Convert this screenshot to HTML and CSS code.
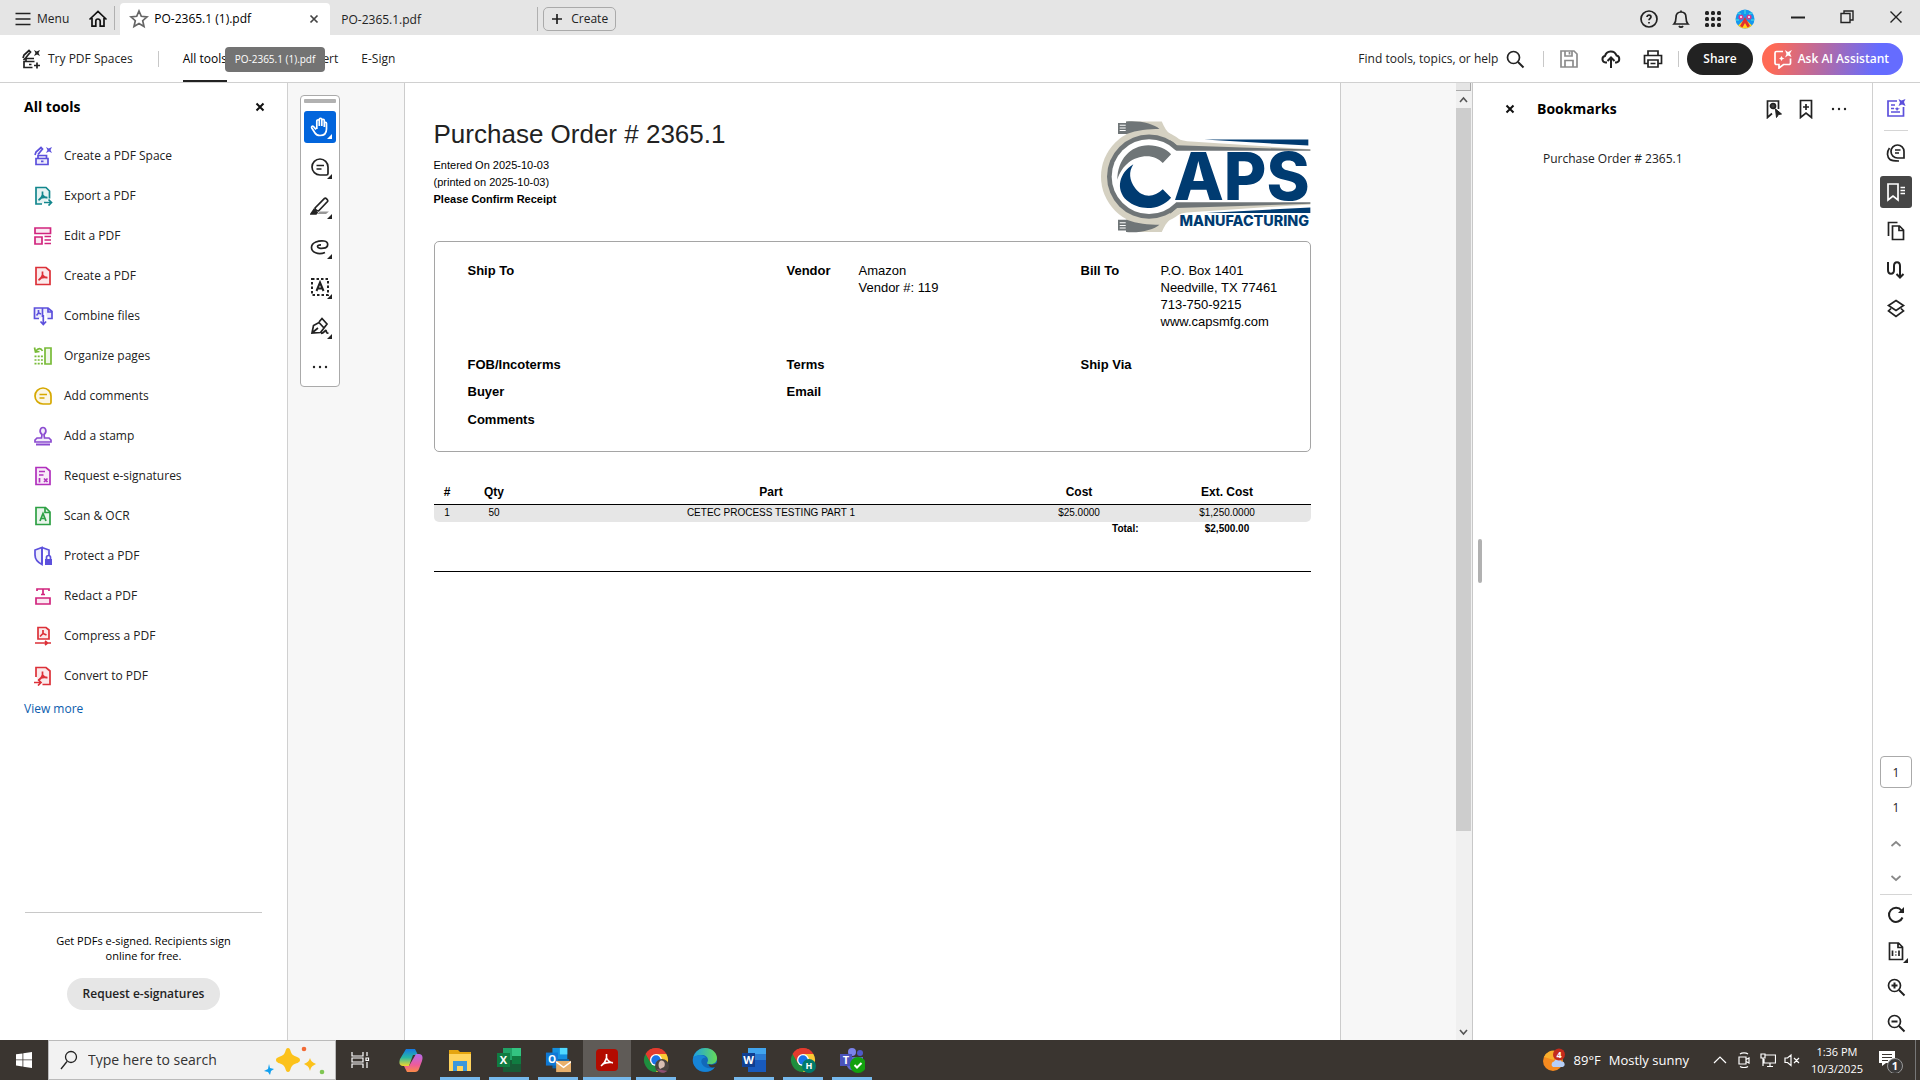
FILE: index.html
```
<!DOCTYPE html>
<html lang="en">

<head>
  <meta charset="UTF-8">
  <meta name="viewport" content="width=device-width, initial-scale=1.0">
  <title>PO-2365.1 (1).pdf</title>
  <link rel="stylesheet" href="styles.css">
</head>

<body>
  <!-- shared shapes -->
  <svg class="sprite" aria-hidden="true">
    <symbol id="acro" viewBox="0 0 20 20">
      <path d="M9.500 5.500v3.500c-.6 2-2 4-4 5.300M9.500 9c1 1.700 2.500 2.700 5 2.700M7.500 12.300c2-.9 4-1 6-.7" />
    </symbol>
    <symbol id="close" viewBox="0 0 10 10">
      <path d="M1.500 1.500l7 7M8.500 1.500l-7 7" />
    </symbol>
    <symbol id="corner" viewBox="0 0 6 6">
      <path d="M6 0v6H0z" />
    </symbol>
    <symbol id="chrome" viewBox="0 0 26 26">
      <path d="M13 13L2.600 7A12 12 0 0 1 23.400 7z" fill="#e33b2e" />
      <path d="M13 13l10.400-6A12 12 0 0 1 13 25z" fill="#fcc934" />
      <path d="M13 13L2.600 7A12 12 0 0 0 13 25l5-8z" fill="#1e8e3e" />
      <path d="M13 7h10.400l-5 9z" fill="#fcc934" />
      <path d="M13 7h10.400A12 12 0 0 0 2.600 7l5.200 9z" fill="#e33b2e" />
      <circle cx="13" cy="13" r="6" fill="#fff" />
      <circle cx="13" cy="13" r="4.700" fill="#1a73e8" />
    </symbol>
  </svg>

  <header class="titlebar">
    <button class="menu-button">
      <svg class="icon" viewBox="0 0 20 20"><path d="M2.500 4.500h15M2.500 10h15M2.500 15.500h15" /></svg>
      Menu
    </button>
    <button class="icon-button home" aria-label="Home">
      <svg class="icon" viewBox="0 0 20 20"><path d="M1.500 10.500L10 2.500l8.500 8M4 9v8.200h3.800v-5a2.200 2.200 0 0 1 4.400 0v5H16V9" /></svg>
    </button>
    <div class="tab active">
      <svg class="icon star" viewBox="0 0 20 20"><path d="M10 2l2.300 5.300 5.700.6-4.300 3.800 1.300 5.700-5-3-5 3 1.300-5.700L2 7.900l5.700-.6z" /></svg>
      <span>PO-2365.1 (1).pdf</span>
      <button class="icon-button tab-close" aria-label="Close tab"><svg class="icon-x"><use href="#close" /></svg></button>
    </div>
    <div class="tab">
      <span>PO-2365.1.pdf</span>
    </div>
    <button class="create-button">
      <svg class="icon-small" viewBox="0 0 12 12"><path d="M6 1v10M1 6h10" /></svg>
      Create
    </button>
    <div class="title-actions">
      <button class="icon-button" aria-label="Help">
        <svg class="icon" viewBox="0 0 20 20"><circle cx="10" cy="10" r="8" /><path d="M8 8c0-2.500 4-2.500 4 0 0 1.500-2 1.500-2 3.300M10 13v1.600" /></svg>
      </button>
      <button class="icon-button" aria-label="Notifications">
        <svg class="icon" viewBox="0 0 20 20"><path d="M3 15c1.800-2 2-3 2-6.500C5 5 7 3 10 3s5 2 5 5.500c0 3.500.2 4.500 2 6.500zM8 17c.8 1.600 3.200 1.600 4 0M10 3V1.500" /></svg>
      </button>
      <button class="icon-button" aria-label="Apps">
        <svg class="icon solid" viewBox="0 0 20 20"><rect x="2" y="2" width="4" height="4" rx="1.500" /><rect x="8" y="2" width="4" height="4" rx="1.500" /><rect x="14" y="2" width="4" height="4" rx="1.500" /><rect x="2" y="8" width="4" height="4" rx="1.500" /><rect x="8" y="8" width="4" height="4" rx="1.500" /><rect x="14" y="8" width="4" height="4" rx="1.500" /><rect x="2" y="14" width="4" height="4" rx="1.500" /><rect x="8" y="14" width="4" height="4" rx="1.500" /><rect x="14" y="14" width="4" height="4" rx="1.500" /></svg>
      </button>
      <button class="icon-button" aria-label="Account">
        <svg class="avatar" viewBox="0 0 20 20">
          <circle cx="10" cy="10" r="9.500" fill="#1597ee" />
          <path d="M10 10l-7 6.500a9.500 9.500 0 0 0 14 0z" fill="#ffd21c" />
          <path d="M10 8l-5 9 2.500 1.500L10 14l2.500 4.500L15 17z" fill="#e2302f" />
          <circle cx="6" cy="8" r="2.600" fill="#d33a8f" /><circle cx="14" cy="8" r="2.600" fill="#d33a8f" />
          <circle cx="6" cy="8" r="1" fill="#fff" /><circle cx="14" cy="8" r="1" fill="#fff" />
          <path d="M3 4l3 1M17 4l-3 1M10 1v4M1 11l3 0M16 11h3" stroke="#35d0e8" stroke-width="1.500" />
        </svg>
      </button>
    </div>
    <div class="window-controls">
      <button aria-label="Minimize"><svg viewBox="0 0 16 16"><path d="M1 8.500h14" stroke-width="2" /></svg></button>
      <button aria-label="Restore"><svg viewBox="0 0 16 16"><path d="M2 4.500h9v9H2zM5 4V2h9v9h-3" /></svg></button>
      <button aria-label="Close"><svg viewBox="0 0 16 16"><path d="M2.500 2.500l11 11M13.500 2.500l-11 11" /></svg></button>
    </div>
  </header>

  <nav class="toolbar">
    <button class="spaces-button">
      <svg class="icon" viewBox="0 0 20 20"><path d="M2 9l1-3 5-4.500 1.500 1.500L5 8.500 2.500 11M13.500 12.500H3v6h8.500M5 12.500V9.500h8M8 15.500h2.500M16 13.500v6M13 16.500h6" /><path d="M13 1l2.700 1.500L19 1l-1.500 3L19 7l-3-1.500L13 7l1.500-3z" class="fill" stroke="none" /></svg>
      Try PDF Spaces
    </button>
    <span class="separator"></span>
    <div class="modes">
      <button class="mode current">All tools</button>
      <button class="mode">Edit</button>
      <button class="mode">Convert</button>
      <button class="mode">E-Sign</button>
      <div class="tooltip" role="tooltip">PO-2365.1 (1).pdf</div>
    </div>
    <button class="find-button">
      Find tools, topics, or help
      <svg class="icon" viewBox="0 0 20 20"><circle cx="8.500" cy="8.500" r="6" /><path d="M13 13l5.500 5.500" stroke-width="2" /></svg>
    </button>
    <span class="separator"></span>
    <div class="file-actions">
      <button class="icon-button muted" aria-label="Save">
        <svg class="icon" viewBox="0 0 20 20"><path d="M2 2h13l3 3v13H2zM6 2v5h7V2M6 18v-6.500h8V18M10.500 3v2.500" /></svg>
      </button>
      <button class="icon-button" aria-label="Upload">
        <svg class="icon" viewBox="0 0 20 20"><path d="M6 13.500H4.500a3.300 3.300 0 0 1-.5-6.500 6 6 0 0 1 11.500-.5 3.600 3.600 0 0 1 0 7H14M10 19V9M6.500 12L10 8.500l3.500 3.500" stroke-width="2" /></svg>
      </button>
      <button class="icon-button" aria-label="Print">
        <svg class="icon" viewBox="0 0 20 20"><path d="M5 6V2h10v4M5 14.500H1.500V6.500h17v8H15M5 11h10v7H5zM7.500 14.500h5" /></svg>
      </button>
    </div>
    <span class="separator"></span>
    <button class="share-button">Share</button>
    <button class="ai-button">
      <svg class="icon" viewBox="0 0 20 20"><path d="M10 2.500H3.500a1.500 1.500 0 0 0-1.500 1.500v10a1.500 1.500 0 0 0 1.500 1.500H6V19l4.500-3.500H16a1.500 1.500 0 0 0 1.500-1.500V9.500" /><path d="M12 1l3 2 4-2-2 3.500L18.500 8l-3.500-1.500L12 8.500l1.500-3.500zM8.500 7l1 1.700 2 .8-2 .8-1 1.700-1-1.700-1.500-.8 1.500-.8z" fill="#fff" stroke="none" /></svg>
      Ask AI Assistant
    </button>
  </nav>

  <main class="workspace">
    <aside class="tools-panel">
      <div class="tools-header">
        <h2>All tools</h2>
        <button class="icon-button" aria-label="Close panel"><svg class="icon-x bold"><use href="#close" /></svg></button>
      </div>
      <ul class="tool-list">
        <li><button>
          <svg class="icon indigo" viewBox="0 0 20 20"><path d="M2 9l1-3 5-4.500 1.500 1.500L5 8.500" /><path d="M3 12.500h12v6H3zM5 12.500V9.500h8.500v3M8 15.300h2.500" class="tint" /><path d="M13 1l2.700 1.500L19 1l-1.500 3L19 7l-3-1.500L13 7l1.500-3z" class="fill" stroke="none" /></svg>
          Create a PDF Space</button></li>
        <li><button>
          <svg class="icon teal" viewBox="0 0 20 20"><path d="M9 18H3V1.500h10L16.500 5v7.500" class="tint" /><use href="#acro" /><path d="M11 16.500h7.500M15.500 13.500l3 3-3 3" /></svg>
          Export a PDF</button></li>
        <li><button>
          <svg class="icon pink" viewBox="0 0 20 20"><path d="M2 2h15.500v5.500H2zM2 11h7v7H2z" class="tint" /><path d="M11.500 10.500h6.500M11.500 14h6.500M11.500 17.500h6.500" /></svg>
          Edit a PDF</button></li>
        <li><button>
          <svg class="icon red" viewBox="0 0 20 20"><path d="M3 1.500h10L17 5v13.500H3z" class="tint" /><use href="#acro" /></svg>
          Create a PDF</button></li>
        <li><button>
          <svg class="icon indigo" viewBox="0 0 20 20"><path d="M6 12.500H1.500V2h8v9M10 2h5l4 3.500v7h-4.500" class="tint" /><path d="M5.500 4v3L3.500 9.500M5.500 7l2.500 1M10.300 9v9M7.500 15.500l2.800 3 2.800-3M15 2v4h4" /></svg>
          Combine files</button></li>
        <li><button>
          <svg class="icon green" viewBox="0 0 20 20"><path d="M12 2h6v16h-6z" class="tint" /><path d="M9.500 5C8 1.800 5 2 3 5M1.500 1.500L2.500 6l4-.5" /><path d="M1.500 10.300h8.500M1.500 14h8.500M1.500 17.700h8.500" stroke-dasharray="2 1.200" /></svg>
          Organize pages</button></li>
        <li><button>
          <svg class="icon gold" viewBox="0 0 20 20"><path d="M10 2a8 8 0 1 0 0 16h6.500a1.500 1.500 0 0 0 1.500-1.500V10a8 8 0 0 0-8-8z" class="tint" /><path d="M6.500 8.500h7.500M6.500 12h5" /></svg>
          Add comments</button></li>
        <li><button>
          <svg class="icon purple" viewBox="0 0 20 20"><path d="M8.500 12l.5-3.500C5.500 5.500 7.500 1.500 10 1.500s4.500 4 1 7l.5 3.500h4.500l2 2v2H2v-2l2-2z" class="tint" /><path d="M3 18.500h14" stroke-width="2" /></svg>
          Add a stamp</button></li>
        <li><button>
          <svg class="icon magenta" viewBox="0 0 20 20"><path d="M3 1.500h10L17 5v13.500H3z" class="tint" /><path d="M6 5.500h6M6 9h4.500M6.500 12v4.500M11 12.500l3.500 3.500M14.500 12.500L11 16" /></svg>
          Request e-signatures</button></li>
        <li><button>
          <svg class="icon forest" viewBox="0 0 20 20"><path d="M3 1.500h9.500L17 6v12.500H3z" class="tint" /><path d="M12 2v4.500h5M7 15l3-7.500 3 7.500M8 12.500h4" /></svg>
          Scan &amp; OCR</button></li>
        <li><button>
          <svg class="icon indigo" viewBox="0 0 20 20"><path d="M9 1.500L16 4v6M9 18.500C4 16 2 13 2 9V4l7-2.500z" class="tint" /><path d="M9 2v16" /><path d="M12 13h7v6h-7z" class="fill" stroke="none" /><path d="M13.500 13v-1.500a2 2 0 0 1 4 0V13" /></svg>
          Protect a PDF</button></li>
        <li><button>
          <svg class="icon pink" viewBox="0 0 20 20"><path d="M3 12h14v6H3z" class="tint" /><path d="M4 5V3h12v2M10 3v6M8 8.500h4" /></svg>
          Redact a PDF</button></li>
        <li><button>
          <svg class="icon red" viewBox="0 0 20 20"><path d="M5 1.500h8L16 4v9H5z" class="tint" /><path d="M10 4v3.500l-3 3M10 7.500l3.500 1.500M2 17h16M12 15l2.500 2-2.500 2" /></svg>
          Compress a PDF</button></li>
        <li><button>
          <svg class="icon red" viewBox="0 0 20 20"><path d="M3 11V1.500h10L17 5v13.500H9.500" class="tint" /><use href="#acro" /><path d="M1 16.500h7M5 13.500l3 3-3 3" /></svg>
          Convert to PDF</button></li>
      </ul>
      <a href="#" class="view-more">View more</a>
      <div class="esign-promo">
        <p>Get PDFs e-signed. Recipients sign online for free.</p>
        <button>Request e-signatures</button>
      </div>
    </aside>

    <section class="viewer">
      <div class="quick-tools">
        <span class="grip"></span>
        <button class="selected" aria-label="Hand">
          <svg class="icon" viewBox="0 0 20 20"><path d="M6 12.500L3.500 9.500C2.500 8.500 1 9.500 1.800 11l3.200 5c1 1.700 2.500 2.500 5 2.500 4 0 6.500-2.500 6.500-6.500V6.500c0-1.700-2.200-1.700-2.200 0V10 3.500c0-1.700-2.500-1.700-2.500 0V9 2.500c0-1.700-2.500-1.700-2.500 0V9 4c0-1.700-2.500-1.700-2.500 0v8" /></svg>
          <svg class="corner"><use href="#corner" /></svg></button>
        <button aria-label="Comment">
          <svg class="icon" viewBox="0 0 20 20"><path d="M10 2a8 8 0 1 0 0 16h6.500a1.500 1.500 0 0 0 1.500-1.500V10a8 8 0 0 0-8-8zM6.500 8.500h7.500M6.500 12h5" /></svg>
          <svg class="corner"><use href="#corner" /></svg></button>
        <button aria-label="Highlight">
          <svg class="icon" viewBox="0 0 20 20"><path d="M10 14.500h9l-3 2.500H7z" fill="#999" stroke="none" /><path d="M5 11L14.500 1.500c1.200-1 4 1.700 3 3L8.500 14c-1.500 0-3.500-1.500-3.500-3z" /><path d="M1 17l3-4.500 3 3-1 1.500z" fill="currentColor" /></svg>
          <svg class="corner"><use href="#corner" /></svg></button>
        <button aria-label="Draw">
          <svg class="icon" viewBox="0 0 20 20"><path d="M15 15.500C8 18.500 1.500 15 1.500 10.500 1.500 5 9 3.500 14 4c5 .7 5 6.500-.5 7.200-3 .4-6-.2-6-1.700 0-1 1.500-1.700 3.500-1.700" /></svg>
          <svg class="corner"><use href="#corner" /></svg></button>
        <button aria-label="Text box">
          <svg class="icon" viewBox="0 0 20 20"><path d="M2 2h16v16H2z" stroke-width="2" stroke-dasharray="2.500 2" /><path d="M6.500 14L10 5.500l3.500 8.500M8 11.500h4" stroke-width="2" /></svg>
          <svg class="corner"><use href="#corner" /></svg></button>
        <button aria-label="Sign">
          <svg class="icon" viewBox="0 0 20 20"><path d="M2 16L3.500 8.500 9 5.500l5 5.500-3.500 4.500zM2.500 15.500L8 11M9 5l3-3.500 5 5.500-3 4M11 16.500c3 0 4-3.500 5-3s-.5 3 2.500 2.500" /></svg>
          <svg class="corner"><use href="#corner" /></svg></button>
        <button aria-label="More">
          <svg class="icon solid" viewBox="0 0 20 20"><circle cx="4" cy="10" r="1.200" /><circle cx="10" cy="10" r="1.200" /><circle cx="16" cy="10" r="1.200" /></svg></button>
      </div>

      <article class="page">
        <div class="page-header">
          <div>
            <h1>Purchase Order # 2365.1</h1>
            <p>Entered On 2025-10-03</p>
            <p>(printed on 2025-10-03)</p>
            <p><b>Please Confirm Receipt</b></p>
          </div>
          <svg class="company-logo" viewBox="60 60 632 340" role="img" aria-label="Caps Manufacturing">
            <g fill="#d5d1c2">
              <path d="M138 64h107c14 34 34 54 76 59l369 24v10H280L207 373h-60z" />
              <path d="M138 395h107c14-34 34-54 76-59l369-24v-10H280L207 86h-60z" />
              <circle cx="207" cy="229" r="144" />
            </g>
            <g fill="#6f7577">
              <circle cx="207" cy="229" r="126" />
              <path d="M270 120l20 15 400 13v5H270zM270 340l20-17 400-13v-5H270z" />
              <path d="M138 64c44-4 84 8 100 22-32 0-68 3-98 15h-26V68h24zM138 395c44 4 84-8 100-22-32 0-68-3-98-15h-26v32h24z" />
            </g>
            <path d="M119 75h18M119 83h18M119 91h18M119 367h18M119 375h18M119 383h18" stroke="#fff" stroke-width="3" />
            <circle cx="207" cy="229" r="112" fill="#fff" />
            <path d="M283 151h409v155H283l-40 20V130z" fill="#fff" />
            <path d="M112 238c0-58 38-103 93-103 30 0 53 11 68 27l-25 26c-13-13-28-20-48-20-40 0-75 27-88 70z" fill="#6f7577" />
            <path d="M160 192c-42 25-55 75-20 108 40 34 100 30 133-8l-25-25c-28 28-63 24-83-4-17-23-20-48-5-71z" fill="#003b71" />
            <path d="M372 118h312v18zM378 338h312v-17z" fill="#003b71" />
            <text x="280" y="298" class="logo-name">APS</text>
            <text x="298" y="377" class="logo-sub">MANUFACTURING</text>
          </svg>
        </div>

        <div class="details">
          <div class="field"><b>Ship To</b></div>
          <div class="field vendor"><b>Vendor</b><span>Amazon<br>Vendor #: 119</span></div>
          <div class="field bill"><b>Bill To</b><span>P.O. Box 1401<br>Needville, TX 77461<br>713-750-9215<br>www.capsmfg.com</span></div>
          <div class="field"><b>FOB/Incoterms</b></div>
          <div class="field"><b>Terms</b></div>
          <div class="field"><b>Ship Via</b></div>
          <div class="field"><b>Buyer</b></div>
          <div class="field"><b>Email</b></div>
          <div class="field"></div>
          <div class="field"><b>Comments</b></div>
        </div>

        <table class="lines">
          <colgroup>
            <col class="col-num"><col class="col-qty"><col><col class="col-cost"><col class="col-ext">
          </colgroup>
          <thead>
            <tr><th>#</th><th>Qty</th><th>Part</th><th>Cost</th><th>Ext. Cost</th></tr>
          </thead>
          <tbody>
            <tr><td>1</td><td>50</td><td>CETEC PROCESS TESTING PART 1</td><td>$25.0000</td><td>$1,250.0000</td></tr>
          </tbody>
          <tfoot>
            <tr><td colspan="4" class="total-label">Total:</td><td>$2,500.00</td></tr>
          </tfoot>
        </table>
      </article>
    </section>

    <div class="scrollbar">
      <span class="split-box"></span>
      <svg viewBox="0 0 15 17"><path d="M4 11l3.500-4 3.500 4" /></svg>
      <span class="thumb"></span>
      <span class="track"></span>
      <svg viewBox="0 0 15 17"><path d="M4 7l3.500 4L11 7" /></svg>
    </div>

    <aside class="bookmarks">
      <span class="splitter"></span>
      <div class="bookmarks-header">
        <button class="icon-button" aria-label="Close bookmarks"><svg class="icon-x bold"><use href="#close" /></svg></button>
        <h2>Bookmarks</h2>
        <div class="bookmark-actions">
          <button class="icon-button" aria-label="Go to bookmark">
            <svg class="icon" viewBox="0 0 20 20"><path d="M9 14.500l-4.500 4V2h11v8" /><circle cx="10" cy="7" r="2.500" fill="#444" /><path d="M12.500 10l6 5-3 .5-2 3z" fill="currentColor" stroke-width="1" /></svg>
          </button>
          <button class="icon-button" aria-label="Add bookmark">
            <svg class="icon" viewBox="0 0 20 20"><path d="M4.500 1.500h11v17L10 14l-5.500 4.500zM10 5v6M7 8h6" /></svg>
          </button>
          <button class="icon-button" aria-label="Options">
            <svg class="icon solid" viewBox="0 0 20 20"><circle cx="4" cy="10" r="1.200" /><circle cx="10" cy="10" r="1.200" /><circle cx="16" cy="10" r="1.200" /></svg>
          </button>
        </div>
      </div>
      <a href="#" class="bookmark">Purchase Order # 2365.1</a>
    </aside>

    <aside class="rail">
      <button aria-label="AI Assistant">
        <svg class="icon indigo" viewBox="0 0 20 20"><path d="M11 3H2v15h15.500V9M5 7h4M5 10.500h3M5 14h9" /><path d="M12.500 1l3 1.500L19.500 1 18 4l1.500 4-3.500-1.500L12.500 8 14 4.500zM11 9l1 1.200 2 .5-2 .8-1 1.500-.8-1.500-1.700-.8 1.700-.5z" class="fill" stroke="none" /></svg></button>
      <span class="rail-line"></span>
      <button aria-label="Comments">
        <svg class="icon" viewBox="0 0 20 20"><path d="M11.500 2a6.500 6.500 0 1 0 0 13H18V8.500A6.500 6.500 0 0 0 11.500 2zM9 7h5.500M9 10h4M3.500 5C.5 9 1 14 4 16.500c2 1.500 5 1.500 9 1.500" /></svg></button>
      <button class="selected" aria-label="Bookmarks">
        <svg class="icon" viewBox="0 0 20 20"><path d="M2 2h10v16l-5-4-5 4zM14.500 5.500H19M14.500 8.500H19M14.500 11.500H19" /></svg></button>
      <button aria-label="Pages">
        <svg class="icon" viewBox="0 0 20 20"><path d="M6.500 5h7l4 4v9.500h-11zM13 5v4.500h4.500M2.500 15V1.500h9" /></svg></button>
      <button aria-label="Attachments">
        <svg class="icon" viewBox="0 0 20 20"><path d="M2 2v8c0 5 6 5 6 0V6c0-5 6-5 6 0v11M10.500 14l3.500 3.500 3.500-3.500" stroke-width="2" /></svg></button>
      <button aria-label="Layers">
        <svg class="icon" viewBox="0 0 20 20"><path d="M10 1.500l7.500 5-7.500 5-7.500-5zM5 9.500L2.500 12l7.500 5.500 7.500-5.500L15 9.500" /></svg></button>

      <div class="rail-bottom">
        <input type="text" value="1" aria-label="Page number">
        <span class="page-total">1</span>
        <button class="step" aria-label="Previous page"><svg class="icon-small" viewBox="0 0 12 12"><path d="M1.500 8L6 4l4.500 4" /></svg></button>
        <button class="step" aria-label="Next page"><svg class="icon-small" viewBox="0 0 12 12"><path d="M1.500 4L6 8l4.500-4" /></svg></button>
        <span class="rail-line"></span>
        <button aria-label="Rotate">
          <svg class="icon" viewBox="0 0 20 20"><path d="M16.500 12.500a7 7 0 1 1-1-7l2 2" stroke-width="2" /><path d="M18 2v6h-6z" fill="currentColor" stroke="none" /></svg></button>
        <button aria-label="Actual size">
          <svg class="icon" viewBox="0 0 20 20"><path d="M3.500 2h9l4 4v12.500h-13zM12 2v4.500h4.500M6.500 9.500v5.500M13 9.500v5.500M9.800 10.500v1M9.800 13.500v1" /></svg>
          <svg class="corner"><use href="#corner" /></svg></button>
        <button aria-label="Zoom in">
          <svg class="icon" viewBox="0 0 20 20"><circle cx="8.500" cy="8.500" r="6" /><path d="M13 13l5.500 5.500M8.500 5.500v6M5.500 8.500h6" stroke-width="2" /></svg></button>
        <button aria-label="Zoom out">
          <svg class="icon" viewBox="0 0 20 20"><circle cx="8.500" cy="8.500" r="6" /><path d="M13 13l5.500 5.500M5.500 8.500h6" stroke-width="2" /></svg></button>
      </div>
    </aside>
  </main>

  <footer class="taskbar">
    <button class="start" aria-label="Start">
      <svg viewBox="0 0 16 16"><path d="M0 2.300l6.500-.9v6.100H0zM7.300 1.300L16 0v7.500H7.300zM0 8.300h6.500v6.200L0 13.600zM7.300 8.300H16V16l-8.700-1.300z" fill="#fff" /></svg>
    </button>
    <label class="search">
      <svg class="search-icon" viewBox="0 0 18 20"><circle cx="11" cy="7" r="5.500" /><path d="M7 11.500L1 19" /></svg>
      <input type="text" placeholder="Type here to search" aria-label="Search">
      <svg class="sparkles" viewBox="0 0 62 30">
        <path d="M24 3c3 0 2 5 5 7s7 2 7 5-4 3-7 5-2 7-5 7-2-5-5-7-7-2-7-5 4-3 7-5 2-7 5-7z" fill="#fcc21b" />
        <path d="M46 13c1 3 2 4 6 6-4 2-5 3-6 7-1-4-2-5-6-7 4-2 5-3 6-6z" fill="#fcc21b" />
        <path d="M5 19l1 4 4 1-3 2-1 4-2-3-4-1 4-2z" fill="#11a0f0" />
        <circle cx="40" cy="4" r="2.300" fill="#f26a36" /><circle cx="58" cy="27" r="2.300" fill="#7fc653" />
      </svg>
    </label>
    <button class="task-view" aria-label="Task view"><svg class="line" viewBox="0 0 26 26"><path d="M5 5v4h11V5M5 21v-4h11v4M5 11h11v4H5zM20 5v4M20 15v6M19 11h2.500v2.500H19z" /></svg></button>
    <div class="apps">
      <button aria-label="Copilot"><svg viewBox="0 0 26 26">
        <defs>
          <linearGradient id="cp1" x1="0" y1="0" x2="0" y2="1"><stop offset="0" stop-color="#1578e4" /><stop offset=".5" stop-color="#28b8a4" /><stop offset="1" stop-color="#f3d52b" /></linearGradient>
          <linearGradient id="cp2" x1="0" y1="0" x2="0" y2="1"><stop offset="0" stop-color="#b46bea" /><stop offset=".6" stop-color="#ee5b9b" /><stop offset="1" stop-color="#fb8b46" /></linearGradient>
        </defs>
        <path d="M8 2h9l3 6h-5l-4 11H5c-4 0-4-4-3-7z" fill="url(#cp1)" />
        <path d="M18 7h3c4 0 4 4 3 7l-3 8c-.7 2-2 3-4 3H9l-3-6h5z" fill="url(#cp2)" />
      </svg></button>
      <button class="running" aria-label="File Explorer"><svg viewBox="0 0 26 26"><path d="M2 3h9l2 2h11v19H2z" fill="#e5a50f" /><path d="M2 7h22v17H2z" fill="#ffd45e" /><path d="M6 24V14h14v10h-4v-5h-6v5z" fill="#3b97dd" /></svg></button>
      <button class="running" aria-label="Excel"><svg viewBox="0 0 26 26"><path d="M7 1h18v24H7z" fill="#21a366" /><path d="M16 1h9v8h-9z" fill="#33c481" /><path d="M7 13h18v12H7z" fill="#185c37" /><path d="M16 9h9v8h-9z" fill="#107c41" /><path d="M1 6h13v14H1z" fill="#107c41" /><text x="7.500" y="17" class="app-letter">X</text></svg></button>
      <button class="running" aria-label="Outlook"><svg viewBox="0 0 28 28"><path d="M8 1h16v14H8z" fill="#1490df" /><path d="M16 1h8v7h-8z" fill="#50d9ff" /><path d="M8 13h18v10H8z" fill="#0a64ad" /><path d="M1 6h13v14H1z" fill="#0f78d4" /><text x="7.500" y="17" class="app-letter">O</text><path d="M12 15h16v12H12z" fill="#e8b06c" /><path d="M12 16l8 6 8-6" fill="none" stroke="#fff" stroke-width="1.500" /></svg></button>
      <button class="running active" aria-label="Acrobat"><svg viewBox="0 0 26 26"><rect x="2" y="2" width="22" height="22" rx="4" fill="#b30b00" /><path d="M12.500 7v4c-.8 3-3 6-5.500 8M12.500 11c1.500 3 3.500 4.500 6.500 5M8.500 17c3-1.500 6-2 10-1.500" fill="none" stroke="#fff" stroke-width="1.600" /></svg></button>
      <button class="running" aria-label="Chrome"><svg viewBox="0 0 26 26"><use href="#chrome" /><circle cx="19" cy="19" r="7" fill="#4b4440" /><path d="M17 14c4-2 6 3 4 6l-4 2c-2-2-2-6 0-8z" fill="#d9bfb2" /><path d="M14 22l5 1 5 1c-3 3-8 2-10-2z" fill="#8d4d72" /></svg></button>
      <button aria-label="Edge"><svg viewBox="0 0 26 26">
        <defs><linearGradient id="edge" x1="0" y1="0" x2="1" y2="0"><stop offset="0" stop-color="#1c9fe4" /><stop offset="1" stop-color="#66db57" /></linearGradient></defs>
        <circle cx="13" cy="13" r="12" fill="#1268b9" /><path d="M1 11C3 4 8 1 13 1c8 0 12 6 12 10 0 5-4 7-9 6-2-.5 0-2 0-4 0-3-3-5-6-5-5 0-8 2-9 3z" fill="url(#edge)" /><path d="M1 11c3-4 11-4 13 0-3-1-6 2-4 6 3 5 9 5 13 3-4 6-13 6-18 2-3-3-5-7-4-11z" fill="#1684d6" /><path d="M16.500 17c3 1.500 6.500.7 9.500-2l-2.500 5c-4 1-7 0-7-3z" fill="#3a3530" /></svg></button>
      <button class="running" aria-label="Word"><svg viewBox="0 0 26 26"><path d="M7 1h18v24H7z" fill="#41a5ee" /><path d="M7 7h18v6H7z" fill="#2b7cd3" /><path d="M7 13h18v12H7z" fill="#185abd" /><path d="M1 6h13v14H1z" fill="#103f91" /><text x="7.500" y="17" class="app-letter">W</text></svg></button>
      <button class="running" aria-label="Chrome, second profile"><svg viewBox="0 0 26 26"><use href="#chrome" /><circle cx="19" cy="19" r="7" fill="#00796b" /><text x="19" y="22" class="app-letter small">H</text></svg></button>
      <button class="running" aria-label="Teams"><svg viewBox="0 0 26 26"><circle cx="13" cy="5" r="4" fill="#7b83eb" /><circle cx="21" cy="6" r="3" fill="#5059c9" /><path d="M8 10h16v9c-2 5-14 7-16 0z" fill="#6068d0" /><path d="M1 7h12v12H1z" fill="#4b53bc" /><text x="7" y="17" class="app-letter">T</text><circle cx="19" cy="18" r="8" fill="#13a10e" /><path d="M15.500 18l2.500 2.500 4.500-4.500" fill="none" stroke="#fff" stroke-width="2" /></svg></button>
    </div>
    <div class="tray">
      <button class="weather">
        <svg viewBox="0 0 24 24"><circle cx="11" cy="13" r="10" fill="#f58a1f" /><path d="M2 9a10 10 0 0 1 12-6l-2 9z" fill="#f9ae2c" /><path d="M11 19a3 3 0 0 1 1-5.500 4 4 0 0 1 7.500 0 2.800 2.800 0 0 1 1 5.500z" fill="#b6cff7" /><circle cx="17" cy="6.500" r="6" fill="#c42b1c" /><text x="17" y="10" class="app-letter small">4</text></svg>
        <span>89°F</span><span>Mostly sunny</span>
      </button>
      <button aria-label="Hidden icons"><svg class="line" viewBox="0 0 16 16"><path d="M2 11l6-6 6 6" /></svg></button>
      <button aria-label="Camera in use"><svg class="line" viewBox="0 0 16 16"><path d="M3 5h7v7H3zM10 7.500l3-1.500v5l-3-1.500M4 2c2-1.500 6-1.500 8 0M4 14.500c2 1.500 6 1.500 8 0" /></svg></button>
      <button aria-label="Network"><svg class="line" viewBox="0 0 16 16"><path d="M5 3h10.500v8H4V7M1 2h4v4H1zM3 6v8M10 11v3M7 14.500h6" /></svg></button>
      <button aria-label="Volume muted"><svg class="line" viewBox="0 0 16 16"><path d="M1 6h2.500L7 3v10.500L3.500 10.500H1zM10 6l5 5M15 6l-5 5" /></svg></button>
      <div class="clock">1:36 PM<br>10/3/2025</div>
      <button class="notifications" aria-label="Notifications"><svg viewBox="0 0 26 26"><path d="M1 4h16v12H8l-4 3v-3H1z" fill="#fff" /><path d="M4 7.500h10M4 10.500h10M4 13.500h6" stroke="#3b3631" /><circle cx="17" cy="19" r="7.500" fill="#3b3a3a" stroke="#999" /><text x="17" y="23" class="app-letter">1</text></svg></button>
    </div>
  </footer>
</body>

</html>
```
FILE: styles.css
```
* {
  margin: 0;
  padding: 0;
  box-sizing: border-box;
}

body {
  height: 100vh;
  display: flex;
  flex-direction: column;
  overflow: hidden;
  background: #fff;
  color: #222;
  font-family: 'Open Sans', sans-serif;
  font-size: 12px;
  line-height: 16px;
}

button,
input {
  border: none;
  background: none;
  color: inherit;
  font: inherit;
}

button {
  cursor: pointer;
  white-space: nowrap;
}

ul {
  list-style: none;
}

a {
  text-decoration: none;
}

h2 {
  font-size: 14px;
  font-weight: 700;
  line-height: 20px;
  color: #000;
}

.sprite {
  position: absolute;
  width: 0;
  height: 0;
}

/* icons */
.icon,
.icon-small,
.icon-x {
  display: block;
  flex: none;
  fill: none;
  stroke: currentColor;
  stroke-width: 1.7;
}

.icon {
  width: 20px;
  height: 20px;
}

.icon-small {
  width: 12px;
  height: 12px;
}

.icon-x {
  width: 10px;
  height: 10px;
  color: #444;
}

.icon-x.bold {
  color: #111;
  stroke-width: 2;
}

.solid,
.fill {
  fill: currentColor;
}

.solid {
  stroke: none;
}

.tint {
  fill: currentColor;
  fill-opacity: 0.1;
}

.indigo { color: #5c50dc; }
.teal { color: #12868d; }
.pink { color: #d1247e; }
.red { color: #dc3138; }
.green { color: #78bb38; }
.gold { color: #d6a800; }
.purple { color: #8b4bd0; }
.magenta { color: #b130bd; }
.forest { color: #2da044; }

.icon-button {
  display: flex;
  align-items: center;
  justify-content: center;
}

.corner {
  position: absolute;
  right: 4px;
  bottom: 4px;
  width: 5px;
  height: 5px;
  fill: currentColor;
}

/* title bar */
.titlebar {
  flex: none;
  display: flex;
  align-items: center;
  height: 35px;
  padding-left: 13px;
  background: #e5e5e5;
}

.menu-button {
  display: flex;
  align-items: center;
  gap: 4px;
  padding-top: 3px;
}

.home {
  height: 24px;
  padding: 3px 6px 0 0;
  margin-left: 19px;
  border-right: 1px solid #b0b0b0;
  color: #111;
}

.tab {
  display: flex;
  align-items: center;
  gap: 6px;
  align-self: flex-end;
  width: 208px;
  height: 24px;
  margin-bottom: 4px;
  padding: 2px 11px 0;
  border-right: 1px solid #b0b0b0;
}

.tab.active {
  gap: 5px;
  width: 210px;
  height: 32px;
  margin: 0 0 0 5px;
  padding: 0 11px 0 9px;
  border: none;
  border-radius: 4px 4px 0 0;
  background: #fff;
  color: #000;
}

.star {
  color: #666;
}

.tab-close {
  margin-left: auto;
}

.create-button {
  display: flex;
  align-items: center;
  gap: 8px;
  height: 24px;
  margin: 3px 0 0 5px;
  padding: 0 7px;
  border: 1px solid #aaa;
  border-radius: 5px;
}

.title-actions {
  display: flex;
  gap: 12px;
  margin-left: auto;
  padding-top: 3px;
}

.avatar {
  width: 20px;
  height: 20px;
}

.window-controls {
  display: flex;
  margin-left: 18px;
}

.window-controls button {
  width: 49px;
  height: 30px;
}

.window-controls svg {
  width: 16px;
  height: 16px;
  margin-bottom: 2px;
  vertical-align: middle;
  fill: none;
  stroke: #222;
  stroke-width: 1.4;
}

/* main toolbar */
.toolbar {
  flex: none;
  display: flex;
  align-items: center;
  height: 48px;
  padding: 0 17px 0 21px;
  border-bottom: 1px solid #d0d0d0;
}

.spaces-button,
.find-button,
.ai-button {
  display: flex;
  align-items: center;
  gap: 7px;
}

.separator {
  width: 1px;
  height: 16px;
  background: #c8c8c8;
}

.spaces-button + .separator {
  margin: 0 24px 0 25px;
}

.modes {
  position: relative;
  display: flex;
  align-self: stretch;
  gap: 23px;
}

.mode.current {
  border-bottom: 2px solid #222;
  padding-top: 2px;
  color: #000;
}

.tooltip {
  position: absolute;
  left: 42px;
  top: 12px;
  padding: 4px 10px;
  border-radius: 4px;
  background: #737373;
  color: #fff;
  font-size: 10px;
  line-height: 17px;
  white-space: nowrap;
}

.find-button {
  margin-left: auto;
  margin-right: 18px;
}

.file-actions {
  display: flex;
  gap: 22px;
  margin: 0 15px;
}

.muted {
  color: #8c8c8c;
}

.share-button,
.ai-button {
  height: 32px;
  border-radius: 16px;
  color: #fff;
  font-weight: 600;
}

.share-button {
  margin: 0 9px 0 8px;
  padding: 0 16px;
  background: #222;
}

.ai-button {
  gap: 5px;
  padding: 0 14px 0 11px;
  background: linear-gradient(100deg, #ff6a55 8%, #b06aa8 45%, #656cff 80%);
}

/* workspace */
.workspace {
  flex: 1;
  display: flex;
  min-height: 0;
}

.tools-panel {
  flex: none;
  display: flex;
  flex-direction: column;
  width: 288px;
  border-right: 1px solid #d0d0d0;
}

.tools-header {
  display: flex;
  align-items: center;
  justify-content: space-between;
  padding: 14px 22px 19px 24px;
}

.tool-list button {
  display: flex;
  align-items: center;
  gap: 11px;
  width: 100%;
  height: 40px;
  padding-left: 33px;
}

.view-more {
  margin: 4px 0 0 24px;
  padding-bottom: 8px;
  line-height: 18px;
  color: #0b5cad;
}

.esign-promo {
  margin: auto 25px 30px;
  padding-top: 20px;
  border-top: 1px solid #c8c8c8;
  text-align: center;
  color: #000;
}

.esign-promo p {
  padding: 0 24px;
  font-size: 11px;
  line-height: 15px;
}

.esign-promo button {
  height: 32px;
  margin-top: 15px;
  padding: 0 16px;
  border-radius: 16px;
  background: #e6e6e6;
  color: #222;
  font-weight: 600;
}

.viewer {
  position: relative;
  flex: 1;
  display: flex;
  justify-content: center;
  background: #f7f7f7;
}

.quick-tools {
  position: absolute;
  left: 12px;
  top: 12px;
  display: flex;
  flex-direction: column;
  gap: 8px;
  width: 40px;
  padding: 3px;
  border: 1px solid #aaa;
  border-radius: 4px;
  background: #fff;
}

.grip {
  height: 4px;
  border-radius: 1px;
  background: #b1b1b1;
}

.quick-tools button,
.rail button {
  position: relative;
  display: flex;
  align-items: center;
  justify-content: center;
  width: 32px;
  height: 32px;
  border-radius: 3px;
}

.quick-tools .selected {
  background: #0265dc;
  color: #fff;
}

/* the pdf page */
.page {
  width: 937px;
  max-width: 100%;
  padding: 34px 29px;
  border: 1px solid #ccc;
  border-width: 0 1px;
  background: #fff;
  color: #000;
  font-family: 'Liberation Sans', sans-serif;
}

.page-header {
  display: flex;
  justify-content: space-between;
  align-items: flex-start;
}

.page-header h1 {
  margin-bottom: 6px;
  font-size: 26px;
  font-weight: 400;
  line-height: 34px;
  color: #222;
}

.page-header p {
  font-size: 11px;
  line-height: 17px;
}

.company-logo {
  width: 211px;
  height: 114px;
  margin-top: 3px;
}

.logo-name,
.logo-sub {
  font-family: Inter, sans-serif;
  font-weight: 800;
  fill: #003b71;
}

.logo-name {
  font-size: 196px;
}

.logo-sub {
  font-size: 43px;
}

.details {
  display: grid;
  grid-template-columns: 319fr 294fr 229fr;
  grid-template-rows: 94px 27px 28px 17px;
  margin-top: 7px;
  padding: 20px 0 23px 33px;
  border: 1px solid #a5a5a5;
  border-radius: 5px;
  font-size: 13px;
  line-height: 17px;
}

.field {
  display: flex;
}

.vendor b {
  width: 72px;
}

.bill b {
  width: 80px;
}

.lines {
  width: 100%;
  margin-top: 32px;
  border-collapse: collapse;
  border-bottom: 1px solid #000;
  table-layout: fixed;
  text-align: center;
  font-size: 10px;
}

.col-num { width: 27px; }
.col-qty { width: 67px; }
.col-cost { width: 129px; }
.col-ext { width: 167px; }

.lines th {
  height: 20px;
  border-bottom: 1px solid #000;
  font-size: 12px;
  line-height: 16px;
  padding-bottom: 4px;
}

.lines td {
  height: 17px;
  line-height: 13px;
}

.lines tbody td {
  padding-bottom: 2px;
  background: #e6e6e6;
}

.lines tbody td:first-child {
  border-bottom-left-radius: 5px;
}

.lines tbody td:last-child {
  border-bottom-right-radius: 5px;
}

.lines tfoot td {
  height: 50px;
  font-weight: 700;
  vertical-align: top;
}

.lines .total-label {
  padding-right: 5px;
  text-align: right;
}

.scrollbar {
  flex: none;
  display: flex;
  flex-direction: column;
  width: 17px;
  padding-right: 1px;
  background: #f0f0f0;
  border-right: 1px solid #c8c8c8;
}

.scrollbar svg {
  flex: none;
  height: 17px;
  fill: none;
  stroke: #555;
  stroke-width: 1.6;
}

.split-box {
  height: 8px;
  border: 1px solid #aaa;
  border-width: 0 1px 1px 0;
  background: #e5e5e5;
}

.thumb {
  flex: 79;
  background: #cdcdcd;
}

.track {
  flex: 21;
}

/* bookmarks */
.bookmarks {
  position: relative;
  flex: none;
  width: 399px;
  padding: 16px 0 0 32px;
}

.splitter {
  position: absolute;
  left: 5px;
  top: 456px;
  width: 4px;
  height: 44px;
  border-radius: 2px;
  background: #b1b1b1;
}

.bookmarks-header {
  display: flex;
  align-items: center;
  gap: 22px;
}

.bookmark-actions {
  display: flex;
  gap: 13px;
  margin: 0 23px 0 auto;
}

.bookmark {
  display: block;
  margin: 32px 0 0 38px;
  color: #222;
}

.rail {
  flex: none;
  display: flex;
  flex-direction: column;
  align-items: center;
  gap: 7px;
  width: 48px;
  padding: 9px 1px 1px 0;
  border-left: 1px solid #d0d0d0;
}

.rail-line {
  width: 24px;
  height: 1px;
  margin: -1px 0;
  background: #d5d5d5;
}

.rail .selected {
  background: #464646;
  color: #fff;
}

.rail-bottom {
  display: flex;
  flex-direction: column;
  align-items: center;
  gap: 4px;
  margin-top: auto;
}

.rail-bottom input {
  width: 32px;
  height: 32px;
  border: 1px solid #aaa;
  border-radius: 4px;
  text-align: center;
}

.page-total {
  padding: 8px 0 6px;
}

.rail-bottom .step {
  height: 30px;
  padding-top: 5px;
  color: #888;
}

.rail-bottom .rail-line {
  width: 32px;
  margin: 0;
}

/* taskbar */
.taskbar {
  flex: none;
  display: flex;
  height: 40px;
  background: #3a3530;
  color: #fff;
}

.start {
  width: 48px;
}

.start svg {
  width: 16px;
  height: 16px;
  vertical-align: middle;
}

.search {
  display: flex;
  align-items: center;
  gap: 10px;
  width: 288px;
  padding: 0 9px 0 11px;
  border: 1px solid #bbb;
  background: #f2f2f2;
  color: #333;
  font-size: 14px;
}

.search input {
  flex: 1;
  min-width: 0;
  outline: none;
}

.search input::placeholder {
  color: #333;
  opacity: 1;
}

.search-icon {
  flex: none;
  width: 18px;
  height: 20px;
  fill: none;
  stroke: #222;
  stroke-width: 1.3;
}

.sparkles {
  flex: none;
  width: 62px;
  height: 30px;
}

.task-view {
  width: 48px;
}

.task-view svg {
  width: 26px;
  height: 26px;
  vertical-align: middle;
}

.apps {
  display: flex;
  gap: 1px;
  margin-left: 3px;
}

.apps button {
  display: flex;
  align-items: center;
  justify-content: center;
  width: 48px;
  border-bottom: 3px solid transparent;
}

.apps svg {
  width: 26px;
  height: 26px;
  margin-top: 3px;
}

.line {
  fill: none;
  stroke: #fff;
  stroke-width: 1.2;
}

.apps .running {
  background: linear-gradient(#76b9ed, #76b9ed) center bottom / 40px 3px no-repeat;
  background-origin: border-box;
  background-clip: border-box;
}

.apps .active {
  background-color: #5f5b57;
  background-size: 100% 3px;
}

.app-letter {
  fill: #fff;
  font-size: 11px;
  font-weight: 700;
  text-anchor: middle;
}

.app-letter.small {
  font-size: 9px;
}

.tray {
  display: flex;
  align-items: center;
  gap: 8px;
  margin-left: auto;
  padding-right: 4px;
}

.weather {
  display: flex;
  align-items: center;
  gap: 8px;
  margin-right: 15px;
  font-size: 13px;
}

.weather svg {
  width: 24px;
  height: 24px;
}

.tray .line {
  display: block;
  width: 16px;
  height: 16px;
}

.clock {
  margin-left: 3px;
  font-size: 11px;
  line-height: 17px;
  text-align: center;
}

.notifications {
  height: 100%;
  margin-left: 7px;
  padding-right: 11px;
  border-right: 1px solid #777;
}

.notifications svg {
  display: block;
  width: 26px;
  height: 26px;
}
```
